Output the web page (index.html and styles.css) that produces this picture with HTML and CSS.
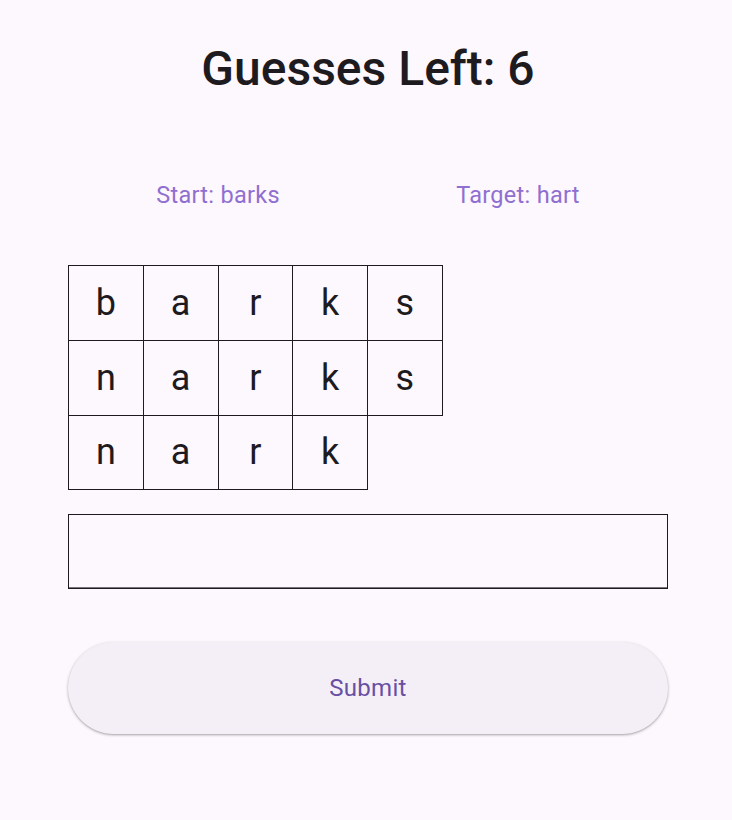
FILE: index.html
```html
<!DOCTYPE html>
<html>
<head>
<meta charset="utf-8">
<link rel="stylesheet" href="styles.css">
</head>
<body>
<main class="page">
  <h1 class="title">Guesses Left: 6</h1>
  <div class="words">
    <span class="word">Start: barks</span>
    <span class="word">Target: hart</span>
  </div>
  <div class="board">
    <div class="row">
      <div class="cell">b</div><div class="cell">a</div><div class="cell">r</div><div class="cell">k</div><div class="cell">s</div>
    </div>
    <div class="row">
      <div class="cell">n</div><div class="cell">a</div><div class="cell">r</div><div class="cell">k</div><div class="cell">s</div>
    </div>
    <div class="row">
      <div class="cell">n</div><div class="cell">a</div><div class="cell">r</div><div class="cell">k</div>
    </div>
  </div>
  <div class="field"><input class="input" type="text" aria-label="guess"></div>
  <button class="submit">Submit</button>
</main>
</body>
</html>
```
FILE: styles.css
```css
html, body {
  margin: 0;
  padding: 0;
  background: #fdf7fe;
}
body {
  font-family: Roboto, "Noto Sans", sans-serif;
  color: #1d1b20;
  width: 732px;
  height: 820px;
  overflow: hidden;
}
.page {
  display: flex;
  flex-direction: column;
  padding: 0 64px 0 68px;
}
.title {
  margin: 0;
  padding-top: 41px;
  height: 56px;
  font-size: 48px;
  line-height: 56px;
  font-weight: 500;
  text-align: center;
  letter-spacing: 0;
}
.words {
  display: flex;
  justify-content: space-around;
  margin-top: 84px;
  height: 28px;
  align-items: center;
}
.word {
  color: #8f6fd0;
  font-size: 23.5px;
  line-height: 28px;
  letter-spacing: 0.3px;
}
.board {
  margin-top: 56px;
  display: flex;
  flex-direction: column;
}
.row {
  display: flex;
  margin-bottom: -1px;
}
.cell {
  box-sizing: border-box;
  width: 75.75px;
  height: 75.75px;
  margin-right: -1px;
  border: 1px solid #1d1b20;
  display: flex;
  align-items: center;
  justify-content: center;
  font-size: 36px;
}
.field {
  margin-top: 25px;
  box-sizing: border-box;
  width: 600px;
  height: 75px;
  border: 1px solid #1d1b20;
  display: flex;
}
.input {
  flex: 1;
  border: 0;
  border-bottom: 1px solid #79747e;
  background: transparent;
  outline: none;
  font-size: 16px;
  margin: 0;
  padding: 0 12px;
}
.submit {
  margin-top: 53px;
  width: 600px;
  height: 92px;
  border: 0;
  border-radius: 46px;
  background: #f4eff7;
  color: #6750a4;
  font-family: Roboto, sans-serif;
  font-size: 24px;
  letter-spacing: 0.3px;
  box-shadow: 0 1px 2px rgba(0,0,0,0.25), 0 1px 3px 1px rgba(0,0,0,0.08);
}
```
